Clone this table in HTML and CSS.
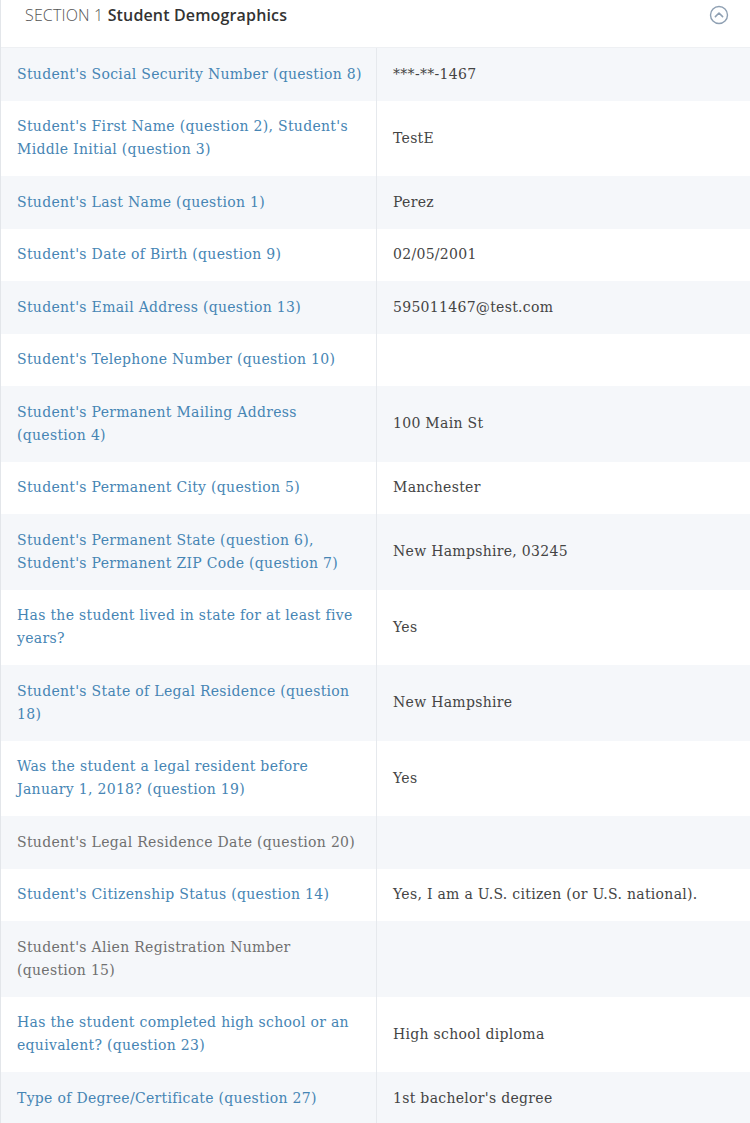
FILE: index.html
```html
<!DOCTYPE html>
<html>
<head>
<meta charset="utf-8">
<link rel="stylesheet" href="styles.css">
</head>
<body>
<div class="panel">
  <div class="panel-head">
    <h2 class="title"><span class="sec">SECTION 1</span> <strong>Student Demographics</strong></h2>
    <svg class="toggle" width="20" height="20" viewBox="0 0 20 20"><circle cx="10" cy="10" r="8.5" fill="none" stroke="#8fa0b3" stroke-width="1.4"/><path d="M6.4 11.6 L10 8 L13.6 11.6" fill="none" stroke="#8fa0b3" stroke-width="1.6" stroke-linecap="round" stroke-linejoin="round"/></svg>
  </div>
  <div class="rows">
    <div class="row"><div class="lbl">Student's Social Security Number (question 8)</div><div class="val">***-**-1467</div></div>
    <div class="row"><div class="lbl">Student's First Name (question 2), Student's Middle Initial (question 3)</div><div class="val">TestE</div></div>
    <div class="row"><div class="lbl">Student's Last Name (question 1)</div><div class="val">Perez</div></div>
    <div class="row"><div class="lbl">Student's Date of Birth (question 9)</div><div class="val">02/05/2001</div></div>
    <div class="row"><div class="lbl">Student's Email Address (question 13)</div><div class="val">595011467@test.com</div></div>
    <div class="row"><div class="lbl">Student's Telephone Number (question 10)</div><div class="val"></div></div>
    <div class="row"><div class="lbl">Student's Permanent Mailing Address (question 4)</div><div class="val">100 Main St</div></div>
    <div class="row"><div class="lbl">Student's Permanent City (question 5)</div><div class="val">Manchester</div></div>
    <div class="row"><div class="lbl">Student's Permanent State (question 6), Student's Permanent ZIP Code (question 7)</div><div class="val">New Hampshire, 03245</div></div>
    <div class="row"><div class="lbl">Has the student lived in state for at least five years?</div><div class="val">Yes</div></div>
    <div class="row"><div class="lbl">Student's State of Legal Residence (question 18)</div><div class="val">New Hampshire</div></div>
    <div class="row"><div class="lbl">Was the student a legal resident before January 1, 2018? (question 19)</div><div class="val">Yes</div></div>
    <div class="row"><div class="lbl muted">Student's Legal Residence Date (question 20)</div><div class="val"></div></div>
    <div class="row"><div class="lbl">Student's Citizenship Status (question 14)</div><div class="val">Yes, I am a U.S. citizen (or U.S. national).</div></div>
    <div class="row"><div class="lbl muted">Student's Alien Registration Number (question 15)</div><div class="val"></div></div>
    <div class="row"><div class="lbl">Has the student completed high school or an equivalent? (question 23)</div><div class="val">High school diploma</div></div>
    <div class="row"><div class="lbl">Type of Degree/Certificate (question 27)</div><div class="val">1st bachelor's degree</div></div>
  </div>
</div>
</body>
</html>
```

FILE: styles.css
```css
* { box-sizing: border-box; }
html, body { margin: 0; padding: 0; background: #ffffff; }
.panel {
  width: 750px;
  border-left: 1px solid #e3e6ea;
  background: #fff;
}
.panel-head {
  height: 48px;
  display: flex;
  align-items: flex-start;
  justify-content: space-between;
  padding: 4px 21px 0 24px;
  border-bottom: 1px solid #eef0f3;
}
.title {
  margin: 0;
  font-family: "Open Sans", "Liberation Sans", sans-serif;
  font-size: 16px;
  line-height: 22px;
  font-weight: 400;
  color: #3a3a3a;
  letter-spacing: 0.15px;
}
.title .sec { color: #555; font-weight: 300; }
.title strong { font-weight: 600; color: #333; }
.toggle { margin-top: 1px; }
.rows { display: flex; flex-direction: column; }
.row {
  display: grid;
  grid-template-columns: 376px 1fr;
  background: #ffffff;
}
.row:nth-child(odd) { background: #f5f7fa; }
.lbl, .val {
  font-family: "DejaVu Serif", serif;
  font-size: 14px;
  letter-spacing: 0.3px;
  line-height: 23px;
  padding: 14.5px 16px 15px 16px;
  display: flex;
  align-items: center;
}
.lbl {
  color: #4685b4;
  border-right: 1px solid #e6e9ed;
  padding-right: 12px;
}
.lbl.muted { color: #707070; }
.val { color: #444; }
```
